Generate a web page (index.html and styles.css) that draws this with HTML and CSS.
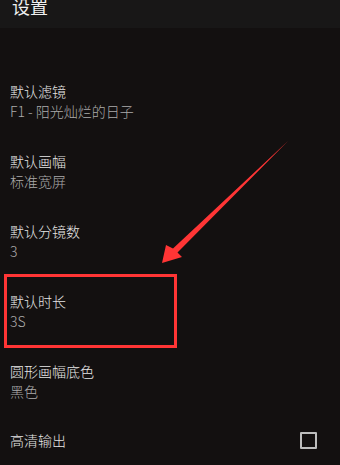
FILE: index.html
```html
<!DOCTYPE html>
<html lang="zh">
<head>
<meta charset="utf-8">
<link rel="stylesheet" href="styles.css">
</head>
<body>
<div class="page">
  <header class="topbar"><h1 class="title">设置</h1></header>
  <ul class="list">
    <li class="item"><div class="item-title">默认滤镜</div><div class="item-sub">F1 - 阳光灿烂的日子</div></li>
    <li class="item"><div class="item-title">默认画幅</div><div class="item-sub">标准宽屏</div></li>
    <li class="item"><div class="item-title">默认分镜数</div><div class="item-sub">3</div></li>
    <li class="item"><div class="item-title">默认时长</div><div class="item-sub">3S</div></li>
    <li class="item"><div class="item-title">圆形画幅底色</div><div class="item-sub">黑色</div></li>
    <li class="item item-check"><div class="item-title">高清输出</div><span class="checkbox"></span></li>
  </ul>
  <svg class="annot" width="340" height="465" viewBox="0 0 340 465">
    <rect x="5.5" y="279.5" width="170" height="71" fill="none" stroke="#ff3535" stroke-width="3"/>
    <polygon fill="#ff3535" points="162,267 166,249 173,252.5 288,145 177.5,256.5 182,261"/>
  </svg>
</div>
</body>
</html>
```
FILE: styles.css
```css
* { box-sizing: border-box; }
html, body { margin: 0; padding: 0; }
body {
  background: #131010;
  font-family: "Noto Sans CJK SC", "Noto Sans", sans-serif;
  width: 340px;
  height: 465px;
  overflow: hidden;
}
.page { position: relative; width: 340px; height: 465px; }
.topbar {
  height: 32px;
  background: #181717;
  padding-left: 12px;
}
.title {
  margin: 0;
  margin-top: -4px;
  font-size: 18px;
  line-height: 20px;
  font-weight: 400;
  color: #f0f0f0;
}
.list { list-style: none; margin: 0; padding: 38px 0 0 0; }
.item {
  padding: 15px 10px;
  height: 70px;
}
.item-title { font-size: 14px; line-height: 20px; color: #e6e6e6; font-weight: 300; }
.item-sub { font-size: 14px; line-height: 20px; color: #ababab; font-weight: 300; }
.item-check {
  height: 48px;
  padding: 14px 23px 14px 10px;
  display: flex;
  align-items: center;
  justify-content: space-between;
}
.checkbox {
  width: 17px;
  height: 17px;
  border: 2px solid #bdbdbd;
  border-radius: 1px;
}
.annot { position: absolute; left: 0; top: 0; pointer-events: none; }
```
